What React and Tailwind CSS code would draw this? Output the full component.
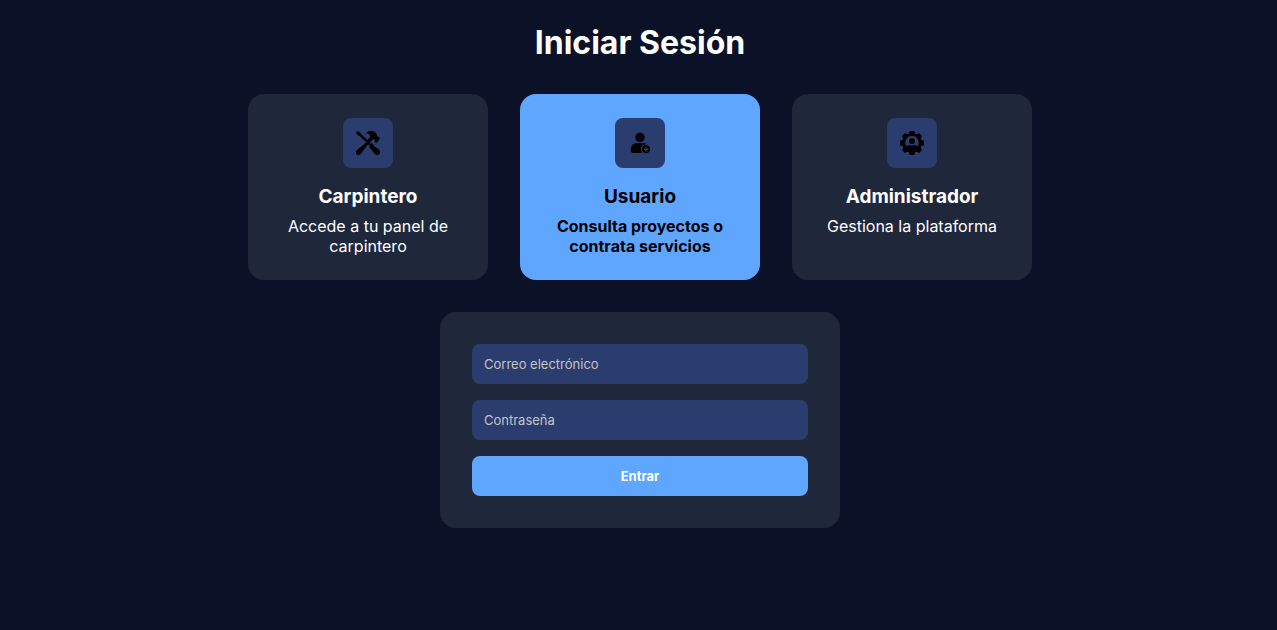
import { useState } from "react";

function ToolsIcon() {
  return (
    <svg viewBox="0 0 72 72" className="size-6" fill="currentColor" aria-hidden="true">
      <path d="M0 5 5 0 13 5 15 9 34 27 29 32 10 14 5 12Z" />
      <path d="M30 5C39-1 51-2 59 5L63 10C62 14 63 16 66 18L68 17 72 22 62 36 56 32 57 28C55 25 52 24 49 26L42 33 44 37 38 43 35 41 16 67C11 73 4 73 1 69-2 65 0 60 4 56L32 33 31 30 42 19C43 12 38 7 30 7Z" />
      <path d="M40 43 47 36 53 42 54 46 68 55C73 60 74 66 70 69 67 73 60 73 56 68L45 54 41 51Z" />
    </svg>
  );
}

function UserPlusIcon() {
  return (
    <svg viewBox="0 0 72 72" className="size-6" fill="currentColor" aria-hidden="true">
      <circle cx="36" cy="19" r="14" />
      <path d="M25 37H47C52 37 55 38 57 40 47 39 39 46 39 55 39 59 40 63 43 66H16C11 66 8 63 8 58 8 45 15 37 25 37Z" />
      <path fillRule="evenodd" d="M54 42a12.500 12.500 0 1 0 0 25 12.500 12.500 0 1 0 0-25ZM52 48H56V53H61V57H56V62H52V57H47V53H52Z" />
    </svg>
  );
}

function AdminIcon() {
  return (
    <svg viewBox="0 0 72 72" className="size-6" fill="currentColor" aria-hidden="true">
      <path
        fillRule="evenodd"
        d="M29 0H43L45 8 50 10 57 6 66 15 62 22 64 27 72 29V43L64 45 62 50 66 57 57 66 50 62 45 64 43 72H29L27 64 22 62 15 66 6 57 10 50 8 45 0 43V29L8 27 10 22 6 15 15 6 22 10 27 8ZM36 15A20 20 0 0 0 19 46C21 44 24 43 28 43H44C48 43 51 44 53 46A20 20 0 0 0 36 15Z"
      />
      <circle cx="36" cy="30" r="9" />
    </svg>
  );
}

const roles = [
  { id: "carpintero", title: "Carpintero", text: "Accede a tu panel de carpintero", Icon: ToolsIcon },
  { id: "usuario", title: "Usuario", text: "Consulta proyectos o contrata servicios", Icon: UserPlusIcon },
  { id: "admin", title: "Administrador", text: "Gestiona la plataforma", Icon: AdminIcon },
];

function RoleCard({ role, selected, onSelect }) {
  const { Icon } = role;
  return (
    <button
      type="button"
      aria-pressed={selected}
      onClick={onSelect}
      className={`flex w-60 cursor-pointer flex-col items-center rounded-2xl p-6 text-center ${
        selected ? "bg-[#5ea6ff] font-bold text-black" : "bg-[#1f273b] text-white"
      }`}
    >
      <span className="mb-4 flex size-[50px] items-center justify-center rounded-lg bg-[#2b3c6e] text-black">
        <Icon />
      </span>
      <span className="mb-1.5 text-[19px] leading-[26px] font-bold">{role.title}</span>
      <span className="text-base leading-5">{role.text}</span>
    </button>
  );
}

function Field({ id, type, label }) {
  return (
    <input
      id={id}
      type={type}
      aria-label={label}
      placeholder={label}
      className="block h-10 w-full rounded-lg bg-[#2b3c6e] px-3 text-[13px] text-white placeholder:text-[#c4c4c4]"
    />
  );
}

export default function App() {
  const [selected, setSelected] = useState("usuario");
  return (
    <main className="flex min-h-screen flex-col items-center bg-[#0b1126] py-6 pl-[3px] font-['Inter',sans-serif] text-white">
      <h1 className="mb-8 text-[32px] leading-[38px] font-bold">Iniciar Sesión</h1>
      <div className="mb-8 flex flex-wrap justify-center gap-8">
        {roles.map((role) => (
          <RoleCard
            key={role.id}
            role={role}
            selected={selected === role.id}
            onSelect={() => setSelected(role.id)}
          />
        ))}
      </div>
      <form
        onSubmit={(event) => event.preventDefault()}
        className="flex w-full max-w-[400px] flex-col gap-4 rounded-2xl bg-[#1f273b] p-8"
      >
        <Field id="email" type="email" label="Correo electrónico" />
        <Field id="password" type="password" label="Contraseña" />
        <button type="submit" className="h-10 cursor-pointer rounded-lg bg-[#5ea6ff] text-[13px] leading-4 font-bold text-white">
          Entrar
        </button>
      </form>
    </main>
  );
}
